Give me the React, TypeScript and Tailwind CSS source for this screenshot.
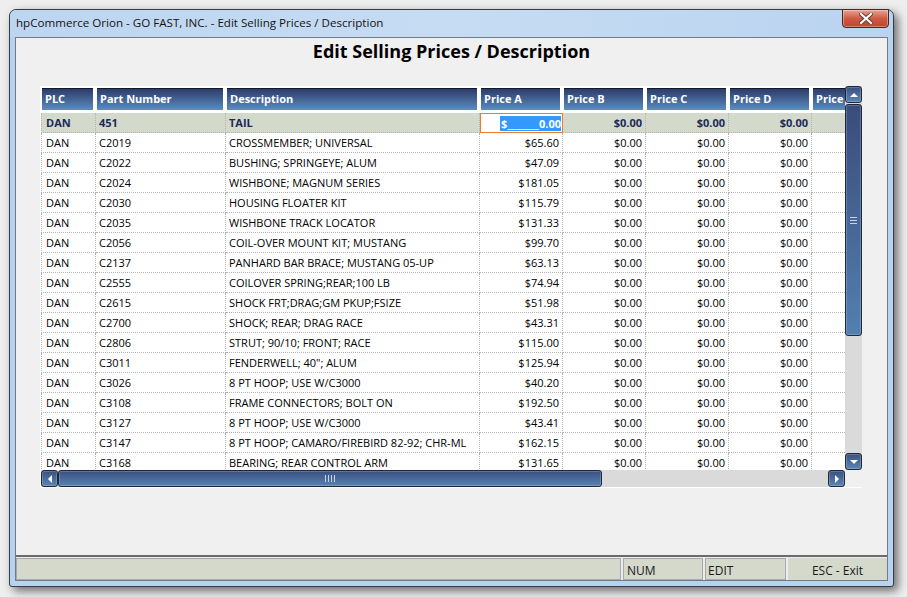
import React from "react";

type Row = { part: string; desc: string; a: string };

const rows: Row[] = [
  { part: "C2019", desc: "CROSSMEMBER; UNIVERSAL", a: "$65.60" },
  { part: "C2022", desc: "BUSHING; SPRINGEYE; ALUM", a: "$47.09" },
  { part: "C2024", desc: "WISHBONE; MAGNUM SERIES", a: "$181.05" },
  { part: "C2030", desc: "HOUSING FLOATER KIT", a: "$115.79" },
  { part: "C2035", desc: "WISHBONE TRACK LOCATOR", a: "$131.33" },
  { part: "C2056", desc: "COIL-OVER MOUNT KIT; MUSTANG", a: "$99.70" },
  { part: "C2137", desc: "PANHARD BAR BRACE; MUSTANG 05-UP", a: "$63.13" },
  { part: "C2555", desc: "COILOVER SPRING;REAR;100 LB", a: "$74.94" },
  { part: "C2615", desc: "SHOCK FRT;DRAG;GM PKUP;FSIZE", a: "$51.98" },
  { part: "C2700", desc: "SHOCK; REAR; DRAG RACE", a: "$43.31" },
  { part: "C2806", desc: "STRUT; 90/10; FRONT; RACE", a: "$115.00" },
  { part: "C3011", desc: 'FENDERWELL; 40"; ALUM', a: "$125.94" },
  { part: "C3026", desc: "8 PT HOOP; USE W/C3000", a: "$40.20" },
  { part: "C3108", desc: "FRAME CONNECTORS; BOLT ON", a: "$192.50" },
  { part: "C3127", desc: "8 PT HOOP; USE W/C3000", a: "$43.41" },
  { part: "C3147", desc: "8 PT HOOP; CAMARO/FIREBIRD 82-92; CHR-ML", a: "$162.15" },
  { part: "C3168", desc: "BEARING; REAR CONTROL ARM", a: "$131.65" },
];

const headers = [
  { label: "PLC", w: "w-[55px]" },
  { label: "Part Number", w: "w-[130px]" },
  { label: "Description", w: "w-[254px]" },
  { label: "Price A", w: "w-[83px]" },
  { label: "Price B", w: "w-[83px]" },
  { label: "Price C", w: "w-[83px]" },
  { label: "Price D", w: "w-[83px]" },
  { label: "Price E", w: "w-[83px]" },
];

const cell =
  "shrink-0 h-full pt-[2px] border-r border-b border-dotted border-[#b4b4b4] flex items-center whitespace-nowrap overflow-hidden";

function Arrow({ dir }: { dir: "up" | "down" | "left" | "right" }) {
  const pts = {
    up: "0,5 4,1 8,5",
    down: "0,1 8,1 4,5",
    left: "5,0 5,8 1,4",
    right: "1,0 1,8 5,4",
  }[dir];
  const vert = dir === "up" || dir === "down";
  return (
    <svg width={vert ? 8 : 6} height={vert ? 6 : 8} viewBox={vert ? "0 0 8 6" : "0 0 6 8"}>
      <polygon points={pts} fill="#ffffff" />
    </svg>
  );
}

const btn =
  "shrink-0 rounded-[3px] border border-[#1f2738] bg-gradient-to-b from-[#3b5081] to-[#5a86b4] shadow-[inset_0_0_0_1px_rgba(255,255,255,0.2)] flex items-center justify-center";

function HeaderCell({ label, w }: { label: string; w: string }) {
  return (
    <div className={`${w} shrink-0 h-full pl-[1px] pr-[3px] pt-[2px] pb-[3px]`}>
      <div className="h-full border-t border-[#10182a] bg-gradient-to-b from-[#2d3d6b] to-[#5c8ebf] text-white font-bold text-[11px] flex items-center pl-[3px] whitespace-nowrap overflow-hidden">
        {label}
      </div>
    </div>
  );
}

function Grid() {
  return (
    <div className="ml-[24px] mt-[22px] w-[822px] h-[402px] bg-white flex flex-col pl-[1px]">
      <div className="flex h-[384px]">
        <div className="w-[804px] h-full overflow-hidden">
          <div className="flex h-[27px] w-[900px]">
            {headers.map((h) => (
              <HeaderCell key={h.label} label={h.label} w={h.w} />
            ))}
          </div>

          {/* current row */}
          <div className="flex h-[20px] w-[900px] bg-[#d3d9cb] font-bold text-[#1b2a58] text-[11px]">
            <div className={`${cell} w-[55px] border-l pl-[4px]`}>DAN</div>
            <div className={`${cell} w-[130px] pl-[3px]`}>451</div>
            <div className={`${cell} w-[254px] pl-[3px]`}>TAIL</div>
            <div className="shrink-0 w-[83px] h-full bg-white border border-[#ee7a2c] flex items-center justify-end pr-[1px]">
              <span className="bg-[#3399ff] text-white pl-[1px] leading-[15px] mt-[1px]">$_______0.00</span>
            </div>
            <div className={`${cell} w-[83px] justify-end pr-[3px]`}>$0.00</div>
            <div className={`${cell} w-[83px] justify-end pr-[3px]`}>$0.00</div>
            <div className={`${cell} w-[83px] justify-end pr-[3px]`}>$0.00</div>
            <div className={`${cell} w-[83px]`} />
          </div>

          {rows.map((r) => (
            <div key={r.part} className="flex h-[20px] w-[900px] text-[11px] text-black">
              <div className={`${cell} w-[55px] border-l pl-[4px]`}>DAN</div>
              <div className={`${cell} w-[130px] pl-[3px]`}>{r.part}</div>
              <div className={`${cell} w-[254px] pl-[3px]`}>{r.desc}</div>
              <div className={`${cell} w-[83px] justify-end pr-[3px]`}>{r.a}</div>
              <div className={`${cell} w-[83px] justify-end pr-[3px]`}>$0.00</div>
              <div className={`${cell} w-[83px] justify-end pr-[3px]`}>$0.00</div>
              <div className={`${cell} w-[83px] justify-end pr-[3px]`}>$0.00</div>
              <div className={`${cell} w-[83px]`} />
            </div>
          ))}
        </div>

        {/* vertical scrollbar */}
        <div className="w-[17px] h-full bg-[#dadada] flex flex-col">
          <div className={`${btn} h-[17px]`}>
            <Arrow dir="up" />
          </div>
          <div className="mt-[1px] h-[232px] rounded-[3px] border border-[#1f2738] bg-gradient-to-b from-[#3a4c7c] to-[#5180b0] shadow-[inset_0_0_0_1px_rgba(255,255,255,0.2)] flex flex-col items-center justify-center gap-[2px]">
            <div className="w-[7px] h-px bg-[#c8d4e6]" />
            <div className="w-[7px] h-px bg-[#c8d4e6]" />
            <div className="w-[7px] h-px bg-[#c8d4e6]" />
          </div>
          <div className="flex-1" />
          <div className={`${btn} h-[17px]`}>
            <Arrow dir="down" />
          </div>
        </div>
      </div>

      {/* horizontal scrollbar */}
      <div className="flex h-[17px]">
        <div className="w-[804px] h-full bg-[#dadada] flex">
          <div className={`${btn} w-[17px]`}>
            <Arrow dir="left" />
          </div>
          <div className="w-[544px] rounded-[3px] border border-[#1f2738] bg-gradient-to-b from-[#3a4f80] to-[#5784b2] shadow-[inset_0_0_0_1px_rgba(255,255,255,0.2)] flex items-center justify-center gap-[2px]">
            <div className="w-px h-[7px] bg-[#c8d4e6]" />
            <div className="w-px h-[7px] bg-[#c8d4e6]" />
            <div className="w-px h-[7px] bg-[#c8d4e6]" />
            <div className="w-px h-[7px] bg-[#c8d4e6]" />
          </div>
          <div className="flex-1" />
          <div className={`${btn} w-[17px]`}>
            <Arrow dir="right" />
          </div>
        </div>
        <div className="w-[17px] h-full bg-[#f0f0f0]" />
      </div>
    </div>
  );
}

export default function App() {
  return (
    <div className="w-[907px] h-[597px] bg-[#eeeeee] pt-[9px] pl-[9px] overflow-hidden font-['Open_Sans','Noto_Sans',sans-serif]">
      <div className="w-[885px] h-[578px] rounded-t-[7px] rounded-b-[3px] border border-[#343d48] bg-[#b9d2ee] flex flex-col shadow-[4px_4px_10px_rgba(0,0,0,0.55)]">
        {/* title bar */}
        <div className="h-[27px] shrink-0 flex items-start justify-between pl-[6px] pr-[4px] rounded-t-[7px] bg-gradient-to-r from-[#bdd5f0] via-[#c6dcf3] to-[#bad3ef]">
          <span className="mt-[5px] text-[11.6px] text-[#141414] leading-[16px]">
            hpCommerce Orion - GO FAST, INC. - Edit Selling Prices / Description
          </span>
          <div className="-mt-[1px] w-[47px] h-[19px] rounded-b-[4px] border border-[#4a2420] bg-gradient-to-b from-[#e6a292] via-[#cf5a43] to-[#c0432c] flex items-center justify-center shadow-[inset_0_0_0_1px_rgba(255,255,255,0.35)]">
            <svg width="14" height="11" viewBox="0 0 14 11">
              <path d="M2 1 L12 10 M12 1 L2 10" stroke="#5a3a36" strokeWidth="4" strokeLinecap="square" />
              <path d="M2 1 L12 10 M12 1 L2 10" stroke="#ffffff" strokeWidth="2.2" strokeLinecap="square" />
            </svg>
          </div>
        </div>

        {/* client area */}
        <div className="mx-[5px] flex-1 border border-[#6f7c8a] bg-[#f0f0f0] flex flex-col">
          <div className="h-[26px] pt-[1px] flex items-center justify-center text-[18px] font-bold text-black">
            Edit Selling Prices / Description
          </div>
          <Grid />
          <div className="flex-1" />
          <div className="h-[25px] shrink-0 border-t-2 border-[#6b6b6b] bg-[#ececec] flex pt-[1px] gap-[2px] text-[12px] text-[#1a1a1a]">
            <div className="w-[605px] border border-[#a9a9a9] bg-[#d4d9cb]" />
            <div className="w-[80px] border border-[#a9a9a9] bg-[#d4d9cb] flex items-center pt-[3px] pl-[3px]">NUM</div>
            <div className="w-[81px] border border-[#a9a9a9] bg-[#d4d9cb] flex items-center pt-[3px] pl-[2px]">EDIT</div>
            <div className="flex-1 bg-[#d4d9cb] flex items-center justify-center pt-[3px]">ESC - Exit</div>
          </div>
        </div>
        <div className="h-[5px] shrink-0" />
      </div>
    </div>
  );
}
